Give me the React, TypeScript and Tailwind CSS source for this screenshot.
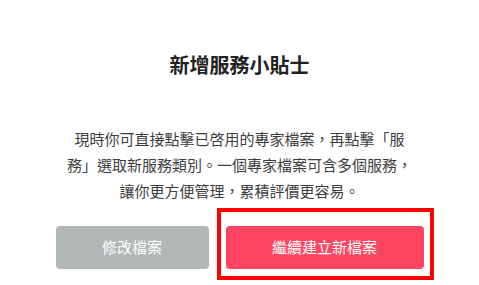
import React from "react";

export default function App() {
  const font = { fontFamily: '"Noto Sans CJK TC", "Noto Sans", sans-serif' };
  return (
    <div
      className="relative w-[479px] h-[285px] bg-white flex flex-col items-center overflow-hidden"
      style={font}
    >
      <h1 className="mt-[51px] text-[20px] leading-[28px] font-bold text-[#222222]">
        新增服務小貼士
      </h1>
      <p className="mt-[47px] text-[15px] leading-[26px] text-center text-[#3d3d3d]">
        現時你可直接點擊已啓用的專家檔案，再點擊「服
        <br />
        務」選取新服務類別。一個專家檔案可含多個服務，
        <br />
        讓你更方便管理，累積評價更容易。
      </p>
      <div className="mt-[22px] flex gap-[17px]">
        <button className="w-[153px] h-[43px] rounded-[4px] bg-[#b2b7b8] text-white text-[15px]">
          修改檔案
        </button>
        <div className="relative">
          <button className="w-[198px] h-[43px] rounded-[4px] bg-[#ff4562] text-white text-[15px]">
            繼續建立新檔案
          </button>
          <div className="absolute left-[-9px] top-[-18px] right-[-10px] bottom-[-11px] border-4 border-[#ff0000] pointer-events-none" />
        </div>
      </div>
    </div>
  );
}
